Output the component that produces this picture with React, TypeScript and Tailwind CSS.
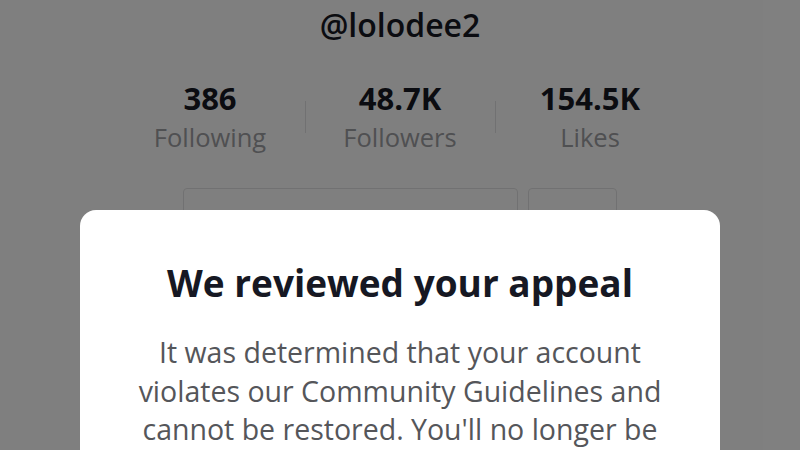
const STATS = [
  { value: "386", label: "Following" },
  { value: "48.7K", label: "Followers" },
  { value: "154.5K", label: "Likes" },
];

function ProfileHeader() {
  return (
    <div className="flex flex-col items-center pt-[6px]">
      <div className="text-[32px] leading-[38px] font-semibold text-[#161823]">@lolodee2</div>
      <div className="mt-[37px] flex items-center">
        {STATS.map((s, i) => (
          <div key={s.label} className="flex items-center">
            {i > 0 && <div className="h-[32px] w-px bg-[#e3e3e4]" />}
            <div className="flex w-[189px] flex-col items-center">
              <div className="text-[31px] leading-[34px] font-bold text-[#161823]">{s.value}</div>
              <div className="mt-[7px] text-[25.5px] leading-[30px] text-[#9fa0a4]">{s.label}</div>
            </div>
          </div>
        ))}
      </div>
      <div className="mt-[36px] flex gap-[10px]">
        <div className="h-[52px] w-[335px] rounded-[4px] border border-[#e3e3e4]" />
        <div className="h-[52px] w-[89px] rounded-[4px] border border-[#e3e3e4]" />
      </div>
    </div>
  );
}

export default function App() {
  return (
    <div className="relative h-[450px] w-[800px] overflow-hidden bg-white font-['Open_Sans',sans-serif]">
      <ProfileHeader />
      <div className="absolute inset-0 bg-black/50" />
      <div className="absolute left-[80px] top-[210px] h-[300px] w-[640px] rounded-[16px] bg-white px-[10px] pt-[51px] text-center">
        <h2 className="text-[37px] leading-[44px] font-bold text-[#161823]">We reviewed your appeal</h2>
        <p className="mt-[28px] text-[28.5px] leading-[38.5px] text-[#55565a]">
          It was determined that your account
          <br />
          violates our Community Guidelines and
          <br />
          cannot be restored. You'll no longer be
        </p>
      </div>
    </div>
  );
}
